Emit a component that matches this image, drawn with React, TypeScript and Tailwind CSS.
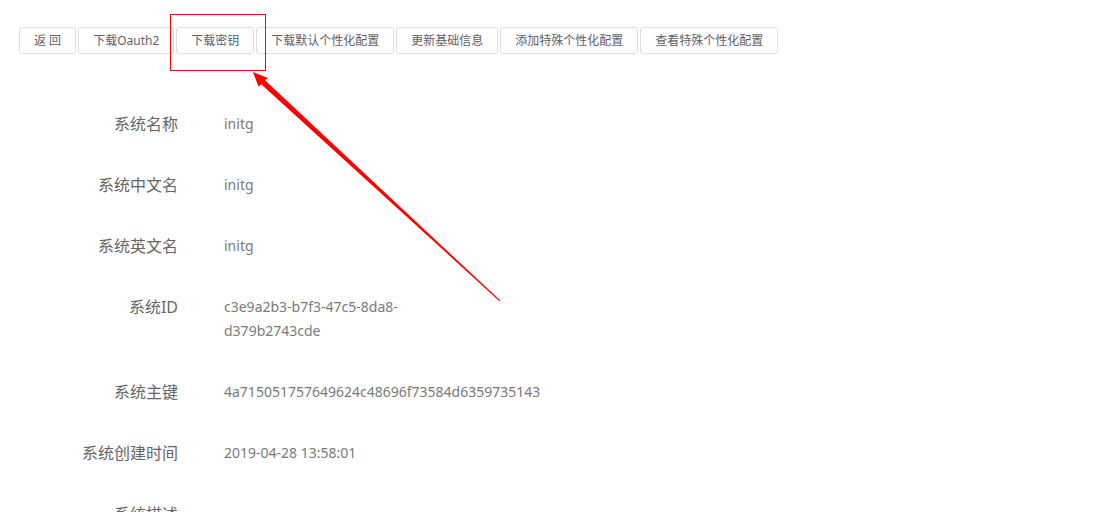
import React from 'react';

const buttons = ['返 回', '下载Oauth2', '下载密钥', '下载默认个性化配置', '更新基础信息', '添加特殊个性化配置', '查看特殊个性化配置'];

const rows: [string, string][] = [
  ['系统名称', 'initg'],
  ['系统中文名', 'initg'],
  ['系统英文名', 'initg'],
  ['系统ID', 'c3e9a2b3-b7f3-47c5-8da8-d379b2743cde'],
  ['系统主键', '4a715051757649624c48696f73584d6359735143'],
  ['系统创建时间', '2019-04-28 13:58:01'],
  ['系统描述', ''],
];

export default function App() {
  return (
    <div
      className="relative h-[512px] w-[1118px] overflow-hidden bg-white text-[#606266]"
      style={{ fontFamily: '"Noto Sans", "Noto Sans CJK SC", sans-serif' }}
    >
      {/* toolbar */}
      <div className="flex gap-[2px] pl-[19px] pt-[27px]">
        {buttons.map((b) => (
          <button
            key={b}
            className="h-[27px] rounded-[3px] border border-[#dcdfe6] bg-white px-[14px] text-[12px] leading-none text-[#606266]"
          >
            {b}
          </button>
        ))}
      </div>

      {/* detail list */}
      <div className="mt-[58px] flex flex-col gap-[37px]">
        {rows.map(([k, v]) => (
          <div key={k} className="flex text-[15px] leading-[24px]">
            <div className="w-[178px] shrink-0 text-right text-[16px] text-[#666]">{k}</div>
            <div className="ml-[46px] w-[205px] text-[14px] text-[#7a7a7a]">
              {k === '系统ID' ? (
                <>
                  c3e9a2b3-b7f3-47c5-8da8-
                  <br />
                  d379b2743cde
                </>
              ) : k === '系统主键' ? (
                <span className="whitespace-nowrap">{v}</span>
              ) : (
                v
              )}
            </div>
          </div>
        ))}
      </div>

      {/* annotation box */}
      <div className="absolute left-[170px] top-[14px] h-[57px] w-[96px] border border-[#ff0000]" />

      {/* annotation arrow */}
      <svg className="pointer-events-none absolute left-0 top-0" width="1118" height="512">
        <polygon
          points="253,72 258.5,86.5 261.2,84.3 499.7,301.4 500.3,300.6 265,80.2 268,78"
          fill="#ff0000"
        />
      </svg>
    </div>
  );
}
